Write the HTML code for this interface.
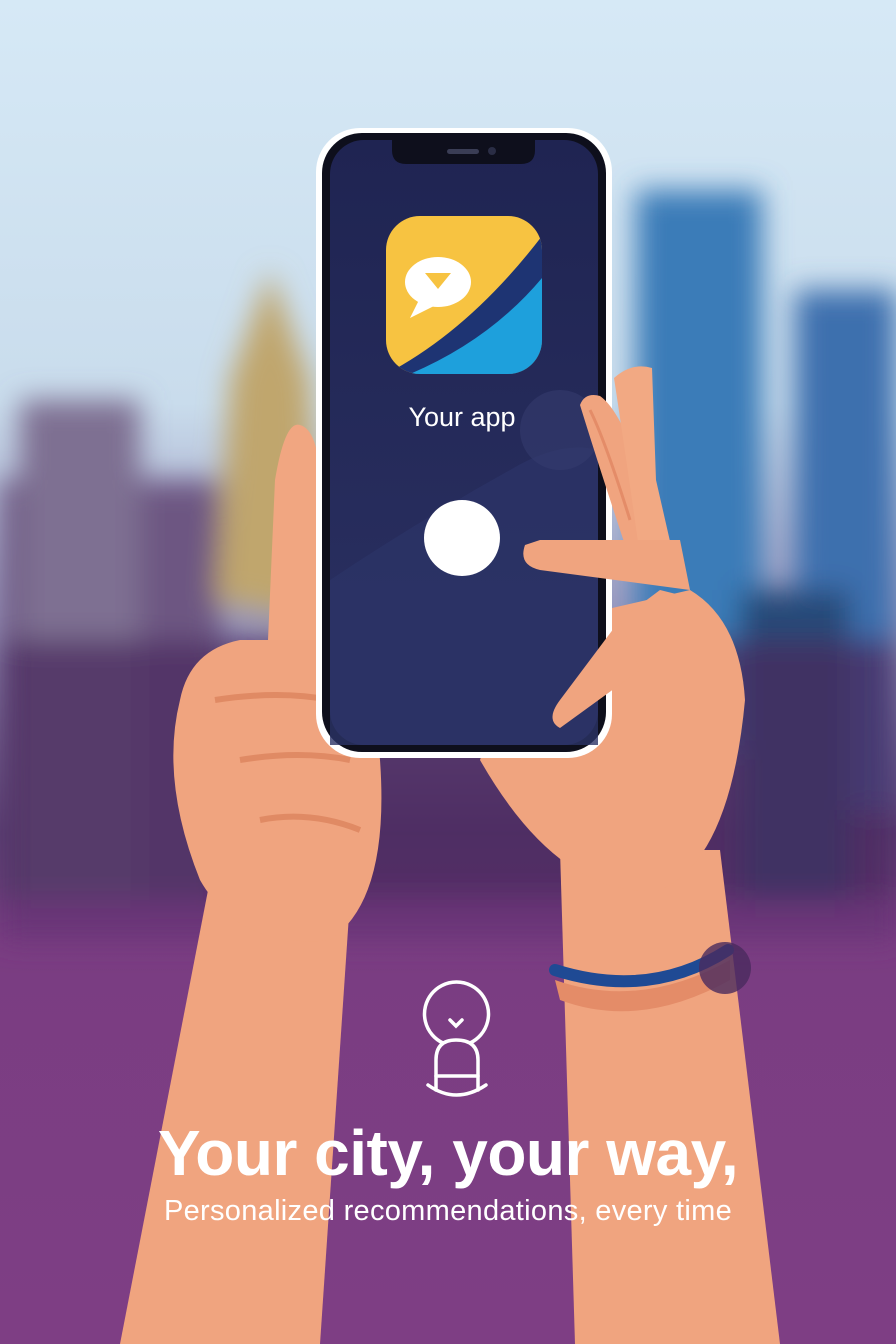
<!DOCTYPE html>
<html><head><meta charset="utf-8"><style>
html,body{margin:0;padding:0}
body{width:896px;height:1344px;overflow:hidden;position:relative;font-family:"Liberation Sans",sans-serif}
svg{position:absolute;left:0;top:0}
.t1{position:absolute;left:0;width:896px;top:1116px;text-align:center;color:#fff;font-weight:bold;font-size:64px;letter-spacing:-0.5px}
.t2{position:absolute;left:0;width:896px;top:1195px;text-align:center;color:#fff;font-size:29px;letter-spacing:0.3px}
</style></head><body>
<svg width="896" height="1344" viewBox="0 0 896 1344">
<defs>
<linearGradient id="sky" x1="0" y1="0" x2="0" y2="1">
<stop offset="0" stop-color="#d6e9f6"/><stop offset="0.3" stop-color="#c9dcec"/><stop offset="0.45" stop-color="#9c9bc0"/><stop offset="0.62" stop-color="#5c3f76"/><stop offset="0.7" stop-color="#7a3d82"/><stop offset="1" stop-color="#7e3e84"/>
</linearGradient>
<filter id="bl" x="-20%" y="-20%" width="140%" height="140%"><feGaussianBlur stdDeviation="14"/></filter>
<clipPath id="icon"><rect x="386" y="216" width="156" height="158" rx="34"/></clipPath>
<linearGradient id="scr" x1="0" y1="0" x2="0" y2="1"><stop offset="0" stop-color="#1f2452"/><stop offset="1" stop-color="#2b3162"/></linearGradient>
</defs>
<rect width="896" height="1344" fill="url(#sky)"/>
<g filter="url(#bl)">
<rect x="0" y="480" width="220" height="420" fill="#6d5782"/>
<rect x="20" y="400" width="120" height="500" fill="#7e6f92"/>
<path d="M215 600 L230 380 L270 270 L310 380 L320 620 Z" fill="#c0a66d"/>
<rect x="636" y="190" width="126" height="560" fill="#3a7cb8"/>
<rect x="795" y="290" width="101" height="520" fill="#3e6fae"/>
<rect x="740" y="590" width="110" height="320" fill="#254a78"/>
<rect x="0" y="640" width="896" height="280" fill="#4a2a5e" opacity="0.75"/>
<rect x="0" y="900" width="896" height="40" fill="#6a3578"/>
</g>
<!-- left arm -->
<path d="M120 1344 L210 880 L350 900 L320 1344 Z" fill="#f0a47f"/>
<path d="M180 700 Q160 780 200 880 Q240 950 330 940 Q390 900 380 760 Q370 660 320 630 L300 640 L240 640 Q190 650 180 700 Z" fill="#f0a47f"/>
<path d="M268 640 L275 480 Q285 420 300 425 Q318 430 320 480 L322 640 Z" fill="#f1a681"/>
<path d="M215 700 Q280 690 330 700 M240 760 Q300 750 350 760 M260 820 Q310 810 360 830" stroke="#e08a64" stroke-width="6" fill="none"/>
<!-- right arm -->
<path d="M560 850 L575 1344 L780 1344 L720 850 Z" fill="#f0a47f"/>
<path d="M480 760 Q560 900 660 890 Q730 860 745 700 Q740 620 690 590 L560 620 L500 700 Z" fill="#f0a47f"/>
<path d="M555 980 Q640 1010 730 960 L730 980 Q640 1030 560 1000 Z" fill="#e48c68"/>
<path d="M555 970 Q650 1000 728 950" stroke="#1f4a94" stroke-width="12" fill="none" stroke-linecap="round"/>
<circle cx="725" cy="968" r="26" fill="#4a2a5e" opacity="0.8"/>
<!-- phone -->
<rect x="316" y="128" width="296" height="630" rx="44" fill="#fff"/>
<rect x="322" y="133" width="284" height="619" rx="40" fill="#0e0f1c"/>
<rect x="330" y="140" width="268" height="605" rx="34" fill="url(#scr)"/>
<path d="M330 580 Q420 520 510 470 Q560 440 598 450 L598 745 L330 745 Z" fill="#2c3366" opacity="0.8"/>
<circle cx="560" cy="430" r="40" fill="#353c6e" opacity="0.6"/>
<path d="M392 138 L535 138 L535 150 Q535 164 521 164 L406 164 Q392 164 392 150 Z" fill="#0e0f1c"/>
<rect x="447" y="149" width="32" height="5" rx="2.5" fill="#3a3d55"/>
<circle cx="492" cy="151" r="4" fill="#2a2d45"/>
<g clip-path="url(#icon)">
<rect x="386" y="216" width="156" height="158" fill="#f7c341"/>
<path d="M386 374 Q470 330 542 236 L542 374 Z" fill="#1e3473"/>
<path d="M410 374 Q490 340 542 278 L542 374 Z" fill="#1ea0dc"/>
</g>
<ellipse cx="438" cy="282" rx="33" ry="25" fill="#fff"/>
<path d="M420 298 L410 318 L438 304 Z" fill="#fff"/>
<path d="M425 273 L451 273 L438 289 Z" fill="#f7c341"/>
<text x="462" y="426" text-anchor="middle" fill="#fff" font-family="Liberation Sans,sans-serif" font-size="27">Your app</text>
<circle cx="462" cy="538" r="38" fill="#fff"/>
<!-- fingers over phone -->
<path d="M580 405 Q585 392 600 396 Q620 410 640 470 L672 548 L630 560 Q600 470 580 405 Z" fill="#f0a47f"/>
<path d="M614 378 Q632 362 652 368 L656 480 L672 550 L640 556 Q625 450 614 378 Z" fill="#f2a983"/>
<path d="M590 410 Q605 440 630 520" stroke="#e48c68" stroke-width="3" fill="none"/>
<path d="M525 545 Q518 565 540 570 L690 590 L680 540 L540 540 Z" fill="#f0a47f"/>
<path d="M560 700 Q545 720 560 728 L640 670 L620 620 Z" fill="#f0a47f"/>
<path d="M620 620 L700 650 L700 600 L660 590 Z" fill="#f0a47f"/>
<!-- bulb icon -->
<g stroke="#fff" stroke-width="3.5" fill="none" stroke-linecap="round">
<path d="M443 1043 A32 32 0 1 1 470 1043"/>
<path d="M436 1090 L436 1060 Q436 1040 456 1040 Q478 1040 478 1060 L478 1090"/>
<path d="M436 1076 L478 1076"/>
<path d="M428 1085 Q456 1105 486 1085"/>
<path d="M450 1020 L456 1026 L462 1020"/>
</g>
</svg>
<div class="t1">Your city, your way,</div>
<div class="t2">Personalized recommendations, every time</div>
</body></html>
